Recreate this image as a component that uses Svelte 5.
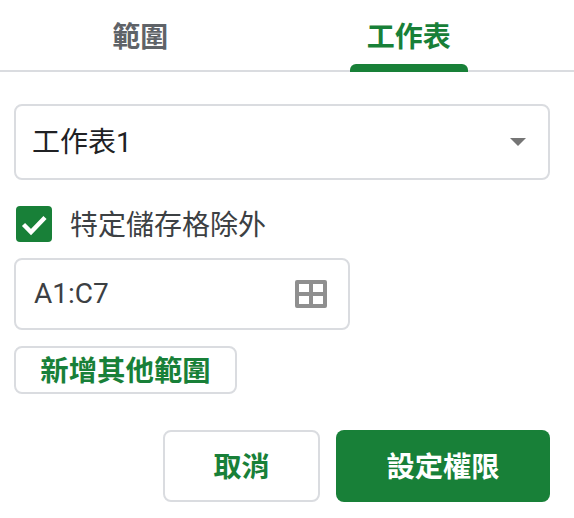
<script>
  const tabs = [
    { label: '範圍', active: false },
    { label: '工作表', active: true }
  ];
</script>

<div class="panel">
  <div class="tabs">
    {#each tabs as tab}
      <div class="tab" class:active={tab.active}><span class="tab-label">{tab.label}</span></div>
    {/each}
  </div>

  <div class="body">
    <div class="select">
      <span class="sheet">工作表1</span>
      <svg class="caret" width="16" height="8" viewBox="0 0 16 8"><path d="M0 0h16L8 8z" fill="#757575"/></svg>
    </div>

    <div class="check-row">
      <span class="checkbox">
        <svg width="36" height="36" viewBox="0 0 36 36"><path d="M7.5 18.5l7.5 7.5L29 11.5" fill="none" stroke="#fff" stroke-width="4.4"/></svg>
      </span>
      <span class="check-label">特定儲存格除外</span>
    </div>

    <div class="range">
      <span class="cells">A1:C7</span>
      <svg width="32" height="28" viewBox="0 0 32 28"><path fill-rule="evenodd" d="M2 0h28a2 2 0 0 1 2 2v24a2 2 0 0 1-2 2H2a2 2 0 0 1-2-2V2a2 2 0 0 1 2-2zM4 4v8h10V4zM18 4v8h10V4zM4 16v8h10v-8zM18 16v8h10v-8z" fill="#8f8f8f"/></svg>
    </div>

    <button class="add">新增其他範圍</button>

    <div class="actions">
      <button class="cancel">取消</button>
      <button class="primary">設定權限</button>
    </div>
  </div>
</div>

<style>
  :global(body) {
    margin: 0;
    background: #fff;
  }
  .panel {
    width: 574px;
    height: 518px;
    font-family: Roboto, "Noto Sans CJK TC", sans-serif;
    font-size: 28px;
    color: #202124;
    overflow: hidden;
  }
  .tabs {
    display: grid;
    grid-template-columns: 1fr 1fr;
    height: 70px;
    border-bottom: 2px solid #dadce0;
    padding: 0 31px 0 6px;
  }
  .tab {
    display: flex;
    justify-content: center;
    padding-top: 19px;
    box-sizing: border-box;
    height: 72px;
    font-weight: 700;
    color: #5f6368;
    line-height: 38px;
  }
  .tab-label { display: block; }
  .tab.active {
    color: #188038;
    position: relative;
  }
  .tab.active::after {
    content: '';
    position: absolute;
    left: 50%;
    bottom: 0;
    width: 118px;
    height: 8px;
    transform: translateX(-50%);
    background: #188038;
    border-radius: 6px 6px 0 0;
  }
  .body {
    padding: 32px 24px 0 14px;
    display: flex;
    flex-direction: column;
    align-items: flex-start;
  }
  .select {
    width: 536px;
    height: 76px;
    box-sizing: border-box;
    border: 2px solid #dadce0;
    border-radius: 8px;
    padding: 0 22px 0 16px;
    display: flex;
    align-items: center;
    justify-content: space-between;
  }
  .sheet { margin-top: -4px; }
  .cells { margin-top: -1px; }
  .check-row {
    display: flex;
    align-items: center;
    gap: 18px;
    margin: 26px 0 16px 2px;
    height: 36px;
    color: #3c4043;
  }
  .check-label { margin-top: -2px; }
  .checkbox {
    width: 36px;
    height: 36px;
    background: #188038;
    border-radius: 4px;
    display: block;
  }
  .checkbox svg { display: block; }
  .range {
    width: 336px;
    height: 72px;
    box-sizing: border-box;
    border: 2px solid #dadce0;
    border-radius: 8px;
    padding: 0 21px 0 18px;
    display: flex;
    align-items: center;
    justify-content: space-between;
    color: #3c4043;
  }
  button {
    font: inherit;
    font-weight: 700;
    box-sizing: border-box;
    border-radius: 8px;
    padding: 0 0 3px;
    cursor: pointer;
  }
  .add {
    margin-top: 16px;
    width: 223px;
    height: 48px;
    padding-bottom: 5px;
    font-size: 28.4px;
    background: #fff;
    border: 2px solid #dadce0;
    color: #188038;
  }
  .actions {
    align-self: flex-end;
    display: flex;
    gap: 16px;
    margin-top: 36px;
  }
  .cancel {
    width: 157px;
    height: 72px;
    background: #fff;
    border: 2px solid #dadce0;
    color: #188038;
  }
  .primary {
    width: 214px;
    height: 72px;
    font-size: 28.3px;
    background: #188038;
    border: none;
    color: #fff;
  }
</style>
